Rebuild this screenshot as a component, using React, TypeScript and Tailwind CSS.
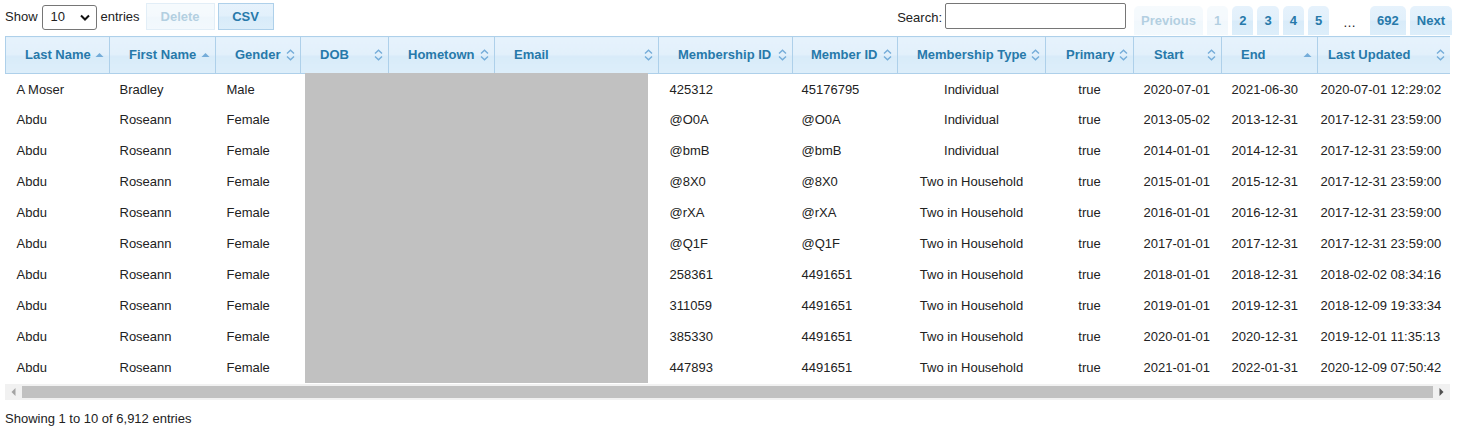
import React from "react";

type Sort = "asc" | "none";

interface Column {
  title: string;
  width: number;
  sort: Sort;
  headPad: string;
  cellAlign: string;
}

const columns: Column[] = [
  { title: "Last Name", width: 104, sort: "asc", headPad: "pl-[19px]", cellAlign: "text-left pl-[11px]" },
  { title: "First Name", width: 106, sort: "asc", headPad: "pl-[19px]", cellAlign: "text-left pl-[10px]" },
  { title: "Gender", width: 85, sort: "none", headPad: "pl-[19px]", cellAlign: "text-left pl-[11px]" },
  { title: "DOB", width: 88, sort: "none", headPad: "pl-[19px]", cellAlign: "text-left pl-[10px]" },
  { title: "Hometown", width: 106, sort: "none", headPad: "pl-[19px]", cellAlign: "text-left pl-[10px]" },
  { title: "Email", width: 164, sort: "none", headPad: "pl-[19px]", cellAlign: "text-left pl-[10px]" },
  { title: "Membership ID", width: 134, sort: "none", headPad: "pl-[19px]", cellAlign: "text-left pl-[11px]" },
  { title: "Member ID", width: 105, sort: "none", headPad: "pl-[18px]", cellAlign: "text-left pl-[9px]" },
  { title: "Membership Type", width: 148, sort: "none", headPad: "pl-[19px]", cellAlign: "text-center" },
  { title: "Primary", width: 88, sort: "none", headPad: "pl-[20px]", cellAlign: "text-center" },
  { title: "Start", width: 88, sort: "none", headPad: "pl-[20px]", cellAlign: "text-left pl-[10px]" },
  { title: "End", width: 96, sort: "asc", headPad: "pl-[19px]", cellAlign: "text-left pl-[10px]" },
  { title: "Last Updated", width: 133, sort: "none", headPad: "pl-[10px]", cellAlign: "text-left pl-[3px]" },
];

const rows: string[][] = [
  ["A Moser", "Bradley", "Male", "", "", "", "425312", "45176795", "Individual", "true", "2020-07-01", "2021-06-30", "2020-07-01 12:29:02"],
  ["Abdu", "Roseann", "Female", "", "", "", "@O0A", "@O0A", "Individual", "true", "2013-05-02", "2013-12-31", "2017-12-31 23:59:00"],
  ["Abdu", "Roseann", "Female", "", "", "", "@bmB", "@bmB", "Individual", "true", "2014-01-01", "2014-12-31", "2017-12-31 23:59:00"],
  ["Abdu", "Roseann", "Female", "", "", "", "@8X0", "@8X0", "Two in Household", "true", "2015-01-01", "2015-12-31", "2017-12-31 23:59:00"],
  ["Abdu", "Roseann", "Female", "", "", "", "@rXA", "@rXA", "Two in Household", "true", "2016-01-01", "2016-12-31", "2017-12-31 23:59:00"],
  ["Abdu", "Roseann", "Female", "", "", "", "@Q1F", "@Q1F", "Two in Household", "true", "2017-01-01", "2017-12-31", "2017-12-31 23:59:00"],
  ["Abdu", "Roseann", "Female", "", "", "", "258361", "4491651", "Two in Household", "true", "2018-01-01", "2018-12-31", "2018-02-02 08:34:16"],
  ["Abdu", "Roseann", "Female", "", "", "", "311059", "4491651", "Two in Household", "true", "2019-01-01", "2019-12-31", "2018-12-09 19:33:34"],
  ["Abdu", "Roseann", "Female", "", "", "", "385330", "4491651", "Two in Household", "true", "2020-01-01", "2020-12-31", "2019-12-01 11:35:13"],
  ["Abdu", "Roseann", "Female", "", "", "", "447893", "4491651", "Two in Household", "true", "2021-01-01", "2022-01-31", "2020-12-09 07:50:42"],
];

const glass =
  "bg-[linear-gradient(to_bottom,#e6f2fc_0%,#e2f0fb_48%,#d8ebf9_52%,#ddeefa_100%)]";

function SortIcon({ sort }: { sort: Sort }) {
  if (sort === "asc") {
    return (
      <svg width="9" height="6" viewBox="0 0 9 6">
        <path d="M0.5 5 L4.5 1 L8.5 5 Z" fill="#74acd9" />
      </svg>
    );
  }
  return (
    <svg width="9" height="12" viewBox="0 0 9 12">
      <path d="M1 4.5 L4.5 1.2 L8 4.5" fill="none" stroke="#74acd9" strokeWidth="1.4" />
      <path d="M1 7.5 L4.5 10.8 L8 7.5" fill="none" stroke="#74acd9" strokeWidth="1.4" />
    </svg>
  );
}

function PageButton({ label, disabled }: { label: string; disabled?: boolean }) {
  return (
    <span
      className={`flex h-[29px] items-center rounded-t-[5px] px-[7px] font-bold text-[#2779aa] ${glass} ${
        disabled ? "opacity-35" : ""
      }`}
    >
      {label}
    </span>
  );
}

export default function App() {
  return (
    <div className="w-[1457px] px-[5px] pt-[3px] font-['Liberation_Sans',Arial,sans-serif] text-[13px] text-[#222]">
      {/* Toolbar */}
      <div className="flex h-[33px] items-start justify-between">
        <div className="flex items-center">
          <span>Show</span>
          <div className="ml-[4px] mt-[1px] flex h-[25px] w-[55px] items-center justify-between rounded-[3px] border border-[#767676] bg-white pl-[8px] pr-[6px]">
            <span>10</span>
            <svg width="10" height="7" viewBox="0 0 10 7">
              <path d="M1 1.5 L5 5.5 L9 1.5" fill="none" stroke="#111" strokeWidth="2" />
            </svg>
          </div>
          <span className="ml-[4px]">entries</span>
          <span className={`ml-[6px] flex h-[27px] w-[69px] items-center justify-center border border-[#aed0ea] font-bold text-[#2779aa] opacity-35 ${glass}`}>
            Delete
          </span>
          <span className={`ml-[3px] flex h-[27px] w-[56px] items-center justify-center border border-[#aed0ea] font-bold text-[#2779aa] ${glass}`}>
            CSV
          </span>
        </div>

        <div className="flex items-start">
          <span className="mt-[5px]">Search:</span>
          <div className="ml-[3px] h-[26px] w-[181px] rounded-[2px] border border-[#767676] bg-white" />
          <div className="ml-[8px] mt-[3px] flex items-center gap-[4px]">
            <PageButton label="Previous" disabled />
            <PageButton label="1" disabled />
            <PageButton label="2" />
            <PageButton label="3" />
            <PageButton label="4" />
            <PageButton label="5" />
            <span className="px-[10px] pt-[4px]">…</span>
            <PageButton label="692" />
            <PageButton label="Next" />
          </div>
        </div>
      </div>

      {/* Table */}
      <div className="relative w-[1445px] overflow-hidden">
        <table className="w-[1445px] table-fixed border-collapse">
          <colgroup>
            {columns.map((c) => (
              <col key={c.title} style={{ width: c.width }} />
            ))}
          </colgroup>
          <thead>
            <tr className="h-[37px]">
              {columns.map((c) => (
                <th
                  key={c.title}
                  className={`relative border border-[#aed0ea] ${c.headPad} pr-[20px] text-left font-bold whitespace-nowrap text-[#2779aa] ${glass}`}
                >
                  {c.title}
                  <span className="absolute top-1/2 right-[5px] flex -translate-y-1/2">
                    <SortIcon sort={c.sort} />
                  </span>
                </th>
              ))}
            </tr>
          </thead>
          <tbody>
            {rows.map((r, i) => (
              <tr key={i} className="h-[31px]">
                {r.map((v, j) => (
                  <td key={j} className={`whitespace-nowrap ${columns[j].cellAlign}`}>
                    {v}
                  </td>
                ))}
              </tr>
            ))}
          </tbody>
        </table>
        {/* Redacted block */}
        <div className="absolute top-[37px] left-[300px] h-[310px] w-[343px] bg-[#c1c1c1]" />
      </div>

      {/* Horizontal scrollbar */}
      <div className="flex h-[16px] w-[1445px] items-center bg-[#f1f1f1]">
        <div className="flex w-[17px] justify-center">
          <svg width="5" height="8" viewBox="0 0 5 8">
            <path d="M4.5 0 L0.5 4 L4.5 8 Z" fill="#a3a3a3" />
          </svg>
        </div>
        <div className="h-[12px] flex-1 bg-[#c1c1c1]" />
        <div className="flex w-[17px] justify-center">
          <svg width="5" height="8" viewBox="0 0 5 8">
            <path d="M0.5 0 L4.5 4 L0.5 8 Z" fill="#505050" />
          </svg>
        </div>
      </div>

      {/* Footer */}
      <div className="mt-[9px]">Showing 1 to 10 of 6,912 entries</div>
    </div>
  );
}
